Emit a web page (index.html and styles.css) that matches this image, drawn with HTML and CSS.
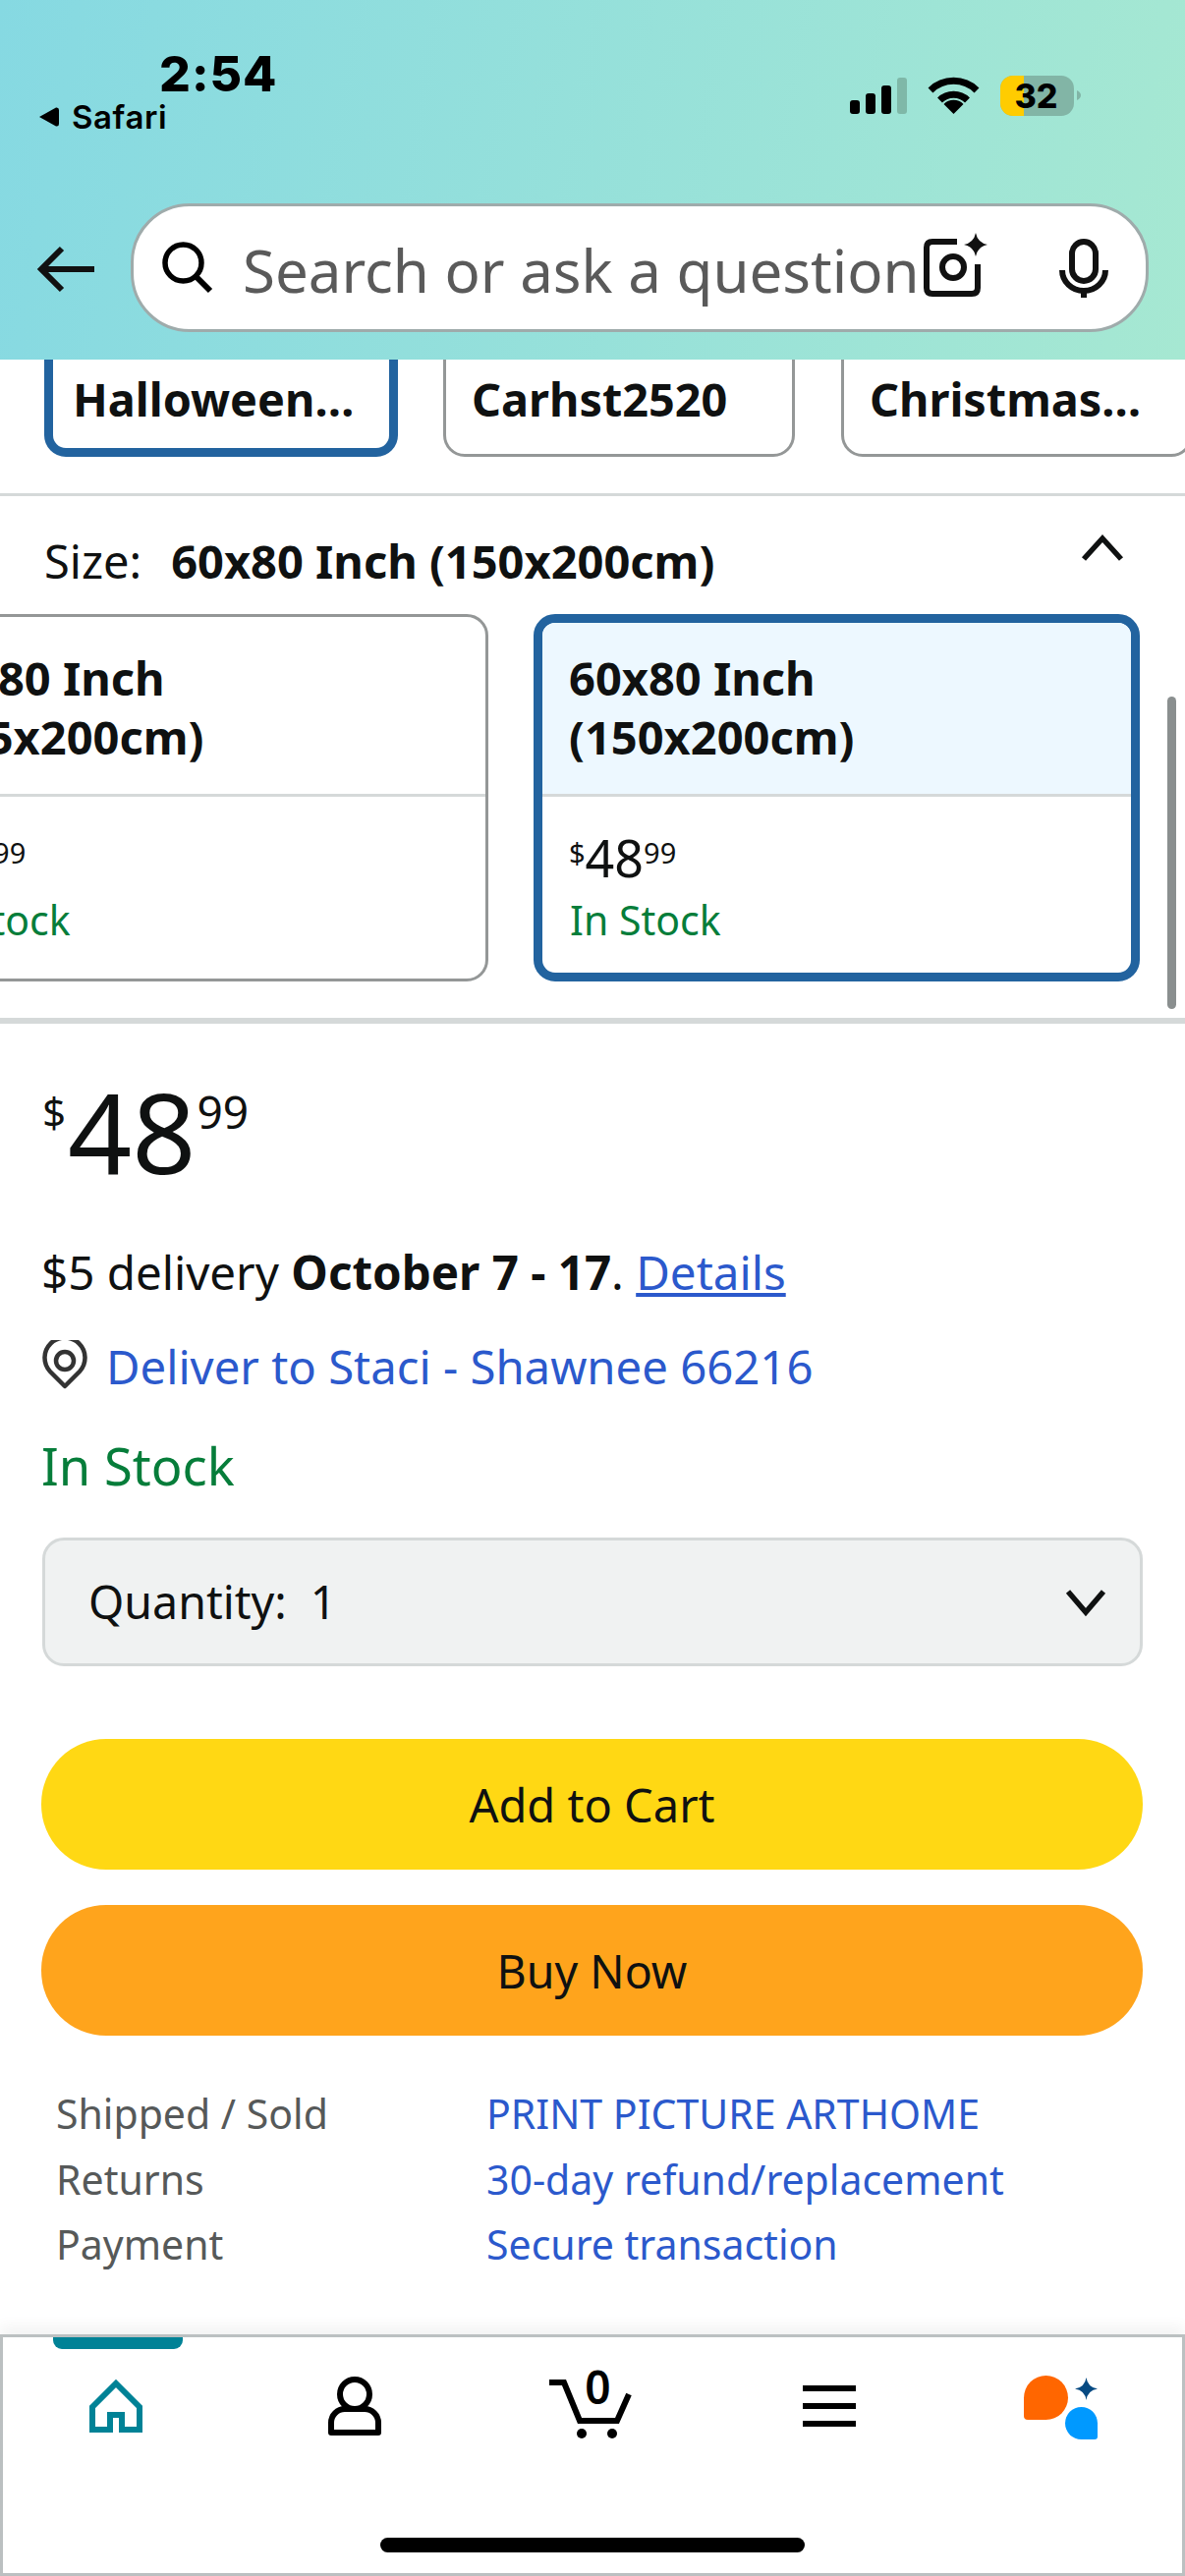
FILE: index.html
```html
<!DOCTYPE html>
<html lang="en">
<head>
<meta charset="utf-8">
<title>Product</title>
<link rel="stylesheet" href="styles.css">
</head>
<body>
<div class="page">
  <header class="top">
    <div class="status">
      <div class="status-left">
        <div class="time">2:54</div>
        <div class="back-app">
          <svg class="back-tri" viewBox="39 108 21 20"><path d="M40 118 L57 108.5 Q60 108 60 111 V125 Q60 128 57 127.5 Z" fill="#000"/></svg>
          <span>Safari</span>
        </div>
      </div>
      <svg class="status-icons" viewBox="860 70 246 60">
        <rect x="865" y="102" width="10" height="14" rx="3" fill="#000"/>
        <rect x="881" y="95" width="10" height="21" rx="3" fill="#000"/>
        <rect x="897" y="87" width="10" height="29" rx="3" fill="#000"/>
        <rect x="913" y="79" width="10" height="37" rx="3" fill="#7fb8a8"/>
        <g fill="none" stroke="#000" stroke-width="7">
          <path d="M947 92 A33.5 33.5 0 0 1 994 92"/>
          <path d="M956.5 102 A20 20 0 0 1 984.5 102"/>
        </g>
        <path d="M970.5 116 L960.5 106 A14 14 0 0 1 980.5 106 Z" fill="#000"/>
        <rect x="1018" y="77" width="75" height="41" rx="13" fill="#82b5a6"/>
        <path d="M1042 77 H1031 A13 13 0 0 0 1018 90 V105 A13 13 0 0 0 1031 118 H1042 Z" fill="#ffcc00"/>
        <path d="M1096 92 Q1100 94 1100 97 Q1100 100 1096 102 Z" fill="#82b5a6"/>
        <text class="batt" x="1054.5" y="110" text-anchor="middle">32</text>
      </svg>
    </div>
    <div class="searchrow">
      <svg class="arrow" viewBox="34 248 66 54"><path d="M96 275 H44 M63 254 L42 275 L63 296" fill="none" stroke="#111" stroke-width="6"/></svg>
      <div class="search">
        <svg class="mag" viewBox="163 247 56 56"><circle cx="186.5" cy="269.5" r="18.5" fill="none" stroke="#000" stroke-width="5.5"/><path d="M199 283 L214 298" fill="none" stroke="#000" stroke-width="6"/></svg>
        <span class="search-text">Search or ask a question</span>
        <svg class="cam" viewBox="938 236 70 70">
          <path d="M975 247 H950 Q944 247 944 253 V294 Q944 300 950 300 H990 Q996 300 996 294 V270" fill="none" stroke="#111" stroke-width="6"/>
          <circle cx="971" cy="273" r="11" fill="none" stroke="#111" stroke-width="6"/>
          <path d="M994 238 Q996 248 1006 250 Q996 252 994 262 Q992 252 982 250 Q992 248 994 238 Z" fill="#111"/>
        </svg>
        <svg class="mic" viewBox="1077 241 54 64">
          <rect x="1092" y="246" width="24" height="40" rx="12" fill="none" stroke="#111" stroke-width="6"/>
          <path d="M1082 275 A22 21 0 0 0 1126 275" fill="none" stroke="#111" stroke-width="6"/>
          <rect x="1101" y="294" width="6" height="9" fill="#111"/>
        </svg>
      </div>
    </div>
  </header>

  <main class="content">
    <div class="pills">
      <div class="pill pill-on">Halloween…</div>
      <div class="pill">Carhst2520</div>
      <div class="pill pill-last">Christmas…</div>
    </div>
    <div class="rule"></div>
    <div class="size-row">
      <div class="size-label"><span>Size:</span><b>60x80 Inch (150x200cm)</b></div>
      <svg class="chev-up" viewBox="1098 542 48 32"><path d="M1103 569 L1122 548 L1141 569" fill="none" stroke="#0f1111" stroke-width="5.5"/></svg>
    </div>
    <div class="cards">
      <div class="card">
        <div class="card-top"><p>60x80 Inch<br>(155x200cm)</p></div>
        <div class="card-bot"><div class="mini-price"><sup>$</sup>48<sup>99</sup></div><div class="mini-stock">In Stock</div></div>
      </div>
      <div class="card card-sel">
        <div class="card-top"><p>60x80 Inch<br>(150x200cm)</p></div>
        <div class="card-bot"><div class="mini-price"><sup>$</sup>48<sup>99</sup></div><div class="mini-stock">In Stock</div></div>
      </div>
      <div class="scrollbar"></div>
    </div>
    <div class="thick-rule"></div>

    <div class="buy">
      <div class="price"><span class="cur">$</span><span class="whole">48</span><span class="frac">99</span></div>
      <p class="delivery">$5 delivery <b>October 7 - 17</b>. <a href="#">Details</a></p>
      <p class="deliver-to">
        <svg class="pin" viewBox="43 1364 46 52"><path d="M66 1411 L51 1396 A20.5 20.5 0 1 1 81 1396 Z" fill="none" stroke="#333" stroke-width="4.5" stroke-linejoin="round"/><circle cx="66" cy="1385" r="9" fill="none" stroke="#333" stroke-width="4.5"/></svg>
        <a class="plain" href="#">Deliver to Staci - Shawnee 66216</a>
      </p>
      <p class="stock">In Stock</p>
      <div class="qty"><span>Quantity:&nbsp; 1</span>
        <svg class="chev-down" viewBox="1082 1616 46 32"><path d="M1087 1621 L1105 1642 L1123 1621" fill="none" stroke="#0f1111" stroke-width="5.5"/></svg>
      </div>
      <div class="btn btn-cart">Add to Cart</div>
      <div class="btn btn-now">Buy Now</div>
      <dl class="info">
        <dt>Shipped / Sold</dt><dd>PRINT PICTURE ARTHOME</dd>
        <dt>Returns</dt><dd>30-day refund/replacement</dd>
        <dt>Payment</dt><dd>Secure transaction</dd>
      </dl>
    </div>
  </main>

  <nav class="nav">
    <div class="nav-mark"></div>
    <div class="nav-icons">
      <svg viewBox="3 2379 240 110"><path d="M94 2473 V2450 L118 2426 L142 2450 V2473 H124 V2458 H112 V2473 Z" fill="none" stroke="#008296" stroke-width="6"/></svg>
      <svg viewBox="243 2379 240 110"><circle cx="361" cy="2437" r="15" fill="none" stroke="#000" stroke-width="6"/><path d="M337 2476 V2466 A14 14 0 0 1 351 2452 H371 A14 14 0 0 1 385 2466 V2476 Z" fill="none" stroke="#000" stroke-width="6" stroke-linejoin="round"/></svg>
      <svg viewBox="483 2379 240 110">
        <path d="M559 2425 H574 L590 2464 H628 L640 2437" fill="none" stroke="#000" stroke-width="6"/>
        <circle cx="592" cy="2477" r="5" fill="#000"/><circle cx="623" cy="2477" r="5" fill="#000"/>
        <text class="cart-n" x="608.5" y="2447" text-anchor="middle">0</text>
      </svg>
      <svg viewBox="723 2379 240 110"><path d="M817 2431 H871 M817 2449 H871 M817 2467 H871" fill="none" stroke="#000" stroke-width="6"/></svg>
      <svg viewBox="963 2379 240 110">
        <path d="M1042 2440.5 A22.5 22.5 0 1 1 1064.5 2463 H1046 Q1042 2463 1042 2459 Z" fill="#ff6600"/>
        <path d="M1117 2466.5 A16.5 16.5 0 1 0 1100.5 2483 H1114 Q1117 2483 1117 2480 Z" fill="#0099ff"/>
        <path d="M1105.5 2420 Q1107 2430 1117 2431.5 Q1107 2433 1105.5 2443 Q1104 2433 1094 2431.5 Q1104 2430 1105.5 2420 Z" fill="#074a82"/>
      </svg>
    </div>
    <div class="home-bar"></div>
  </nav>
</div>
</body>
</html>
```
FILE: styles.css
```css
* { box-sizing: border-box; }
html, body { margin: 0; padding: 0; }
body { background: #fff; color: #0f1111; font-family: "Noto Sans", "Open Sans", sans-serif; }
p, dl, dd { margin: 0; }
a { color: #2b59cc; }
.page { width: 1206px; height: 2622px; overflow: hidden; display: flex; flex-direction: column; }

/* header */
.top { flex: none; height: 366px; background: linear-gradient(100deg, #86d9e2 0%, #a6e8d2 100%); }
.status { height: 207px; display: flex; justify-content: space-between; align-items: flex-start; padding-right: 100px; }
.status-left { padding: 50px 0 0 39px; font-family: Inter, "Liberation Sans", sans-serif; color: #000; }
.time { margin-left: 123px; font-size: 50px; font-weight: 800; line-height: 50px; letter-spacing: 1px; }
.back-app { display: flex; align-items: center; gap: 13px; font-size: 33px; font-weight: 600; line-height: 38px; letter-spacing: .6px; }
.back-tri { width: 21px; height: 20px; }
.status-icons { width: 246px; height: 60px; margin-top: 70px; }
.batt { font-family: Inter, "Liberation Sans", sans-serif; font-size: 34px; font-weight: 800; fill: #000; }
.searchrow { height: 131px; display: flex; align-items: center; padding-left: 34px; }
.arrow { width: 66px; height: 54px; flex: none; margin-right: 33px; margin-top: 2px; }
.search { width: 1036px; height: 131px; flex: none; display: flex; align-items: center; background: #fff; border: 3px solid #9fabab; border-radius: 60px; padding-left: 27px; }
.mag { width: 56px; height: 56px; flex: none; margin-right: 28px; }
.search-text { width: 0; flex: 1; white-space: nowrap; color: #5a5a5a; font-size: 60px; line-height: 70px; padding-top: 5px; }
.cam { width: 70px; height: 70px; flex: none; margin-top: -6px; margin-right: 69px; }
.mic { width: 54px; height: 64px; flex: none; margin-right: 36px; }

/* content */
.content { flex: 1; min-height: 0; overflow: hidden; }
.pills { height: 99px; overflow: hidden; display: flex; align-items: flex-end; gap: 46px; padding-left: 45px; }
.pill { flex: none; width: 358px; height: 130px; display: flex; align-items: flex-end; padding: 0 0 26px 26px; border: 3px solid #949797; border-radius: 22px; font-size: 46.8px; font-weight: 700; line-height: 60px; white-space: nowrap; }
.pill-on { border: 9px solid #22639f; padding: 0 0 20px 20px; width: 360px; }
.pill-last { margin-left: 1px; }
.rule { height: 3px; margin-top: 37px; background: #d5d9d9; }
.size-row { height: 120px; display: flex; justify-content: space-between; align-items: flex-start; padding: 38px 60px 0 45px; }
.size-label { font-size: 47px; line-height: 56px; white-space: nowrap; }
.size-label b { font-weight: 700; margin-left: 30px; }
.chev-up { width: 48px; height: 32px; margin-top: -1px; }
.cards { height: 374px; display: flex; gap: 46px; margin-left: -119px; width: 1325px; position: relative; }
.card { --b: 3px; flex: none; width: 616px; height: 374px; border: var(--b) solid #949797; border-radius: 22px; overflow: hidden; background: #fff; }
.card-sel { --b: 9px; width: 617px; border-color: #22639f; }
.card-top { height: calc(186px - var(--b)); padding: calc(35px - var(--b)) 0 0 calc(36px - var(--b)); border-bottom: 3px solid #d5d9d9; font-size: 47px; font-weight: 700; line-height: 60px; }
.card-sel .card-top { background: #edf8ff; }
.card-bot { padding: 31px 0 0 calc(36px - var(--b)); }
.mini-price { font-size: 52px; line-height: 62px; height: 62px; }
.mini-price sup { font-size: 29px; line-height: 0; vertical-align: 14px; }
.mini-stock { color: #067d3a; font-size: 41px; line-height: 58px; margin: 3px 0 0 1px; }
.scrollbar { position: absolute; right: 9px; top: 84px; width: 9px; height: 318px; background: #8a8f8f; border-radius: 5px; }
.thick-rule { height: 6px; margin-top: 37px; background: #d5d9d9; }

.buy { padding: 0 43px 0 42px; }
.price { height: 185px; padding: 50px 0 0 1px; line-height: 130px; white-space: nowrap; display: flex; align-items: flex-start; }
.cur { font-size: 42px; line-height: 70px; margin-top: 5px; margin-right: 2px; }
.whole { font-size: 114px; line-height: 130px; margin-top: -6px; }
.frac { font-size: 46px; line-height: 56px; margin-top: 11px; margin-left: 1px; }
.delivery { margin-top: 37px; font-size: 47.5px; line-height: 62px; white-space: nowrap; }
.delivery b { font-weight: 700; }
.deliver-to { display: flex; align-items: center; margin-top: 34px; font-size: 47.3px; line-height: 62px; white-space: nowrap; }
.pin { width: 46px; height: 52px; flex: none; margin-left: 1px; margin-right: 19px; margin-top: -2px; }
.plain { text-decoration: none; }
.stock { margin-top: 35px; color: #067d3a; font-size: 52.5px; line-height: 70px; }
.qty { height: 131px; margin-top: 38px; display: flex; justify-content: space-between; align-items: center; background: #f0f2f2; border: 3px solid #d5d9d9; border-radius: 22px; padding: 0 32px 2px 44px; font-size: 46.5px; margin-left: 1px; }
.chev-down { width: 46px; height: 32px; margin-top: 2px; }
.btn { height: 133px; display: flex; align-items: center; justify-content: center; border-radius: 66px; font-size: 47px; }
.btn-cart { margin-top: 74px; background: #ffd814; }
.btn-now { margin-top: 36px; background: #ffa41c; font-size: 46.5px; }
.info { margin-top: 46px; padding-left: 15px; display: grid; grid-template-columns: 438px 1fr; font-size: 41px; line-height: 66.7px; white-space: nowrap; }
.info dt { color: #565959; }
.info dd { color: #2b59cc; }

/* bottom nav */
.nav { flex: none; height: 246px; position: relative; background: #fff; border: 3px solid #bbc0c1; box-shadow: 0 -8px 14px rgba(0, 0, 0, .05); }
.nav-mark { position: absolute; left: 51px; top: 0; width: 132px; height: 12px; background: #008296; border-radius: 0 0 9px 9px; }
.nav-icons { display: grid; grid-template-columns: repeat(5, 240px); height: 110px; }
.nav-icons svg { display: block; width: 240px; height: 110px; }
.cart-n { font-family: "Noto Sans", sans-serif; font-size: 46px; font-weight: 600; fill: #000; }
.home-bar { width: 432px; height: 15px; margin: 94px 0 0 384px; background: #000; border-radius: 8px; }
```
